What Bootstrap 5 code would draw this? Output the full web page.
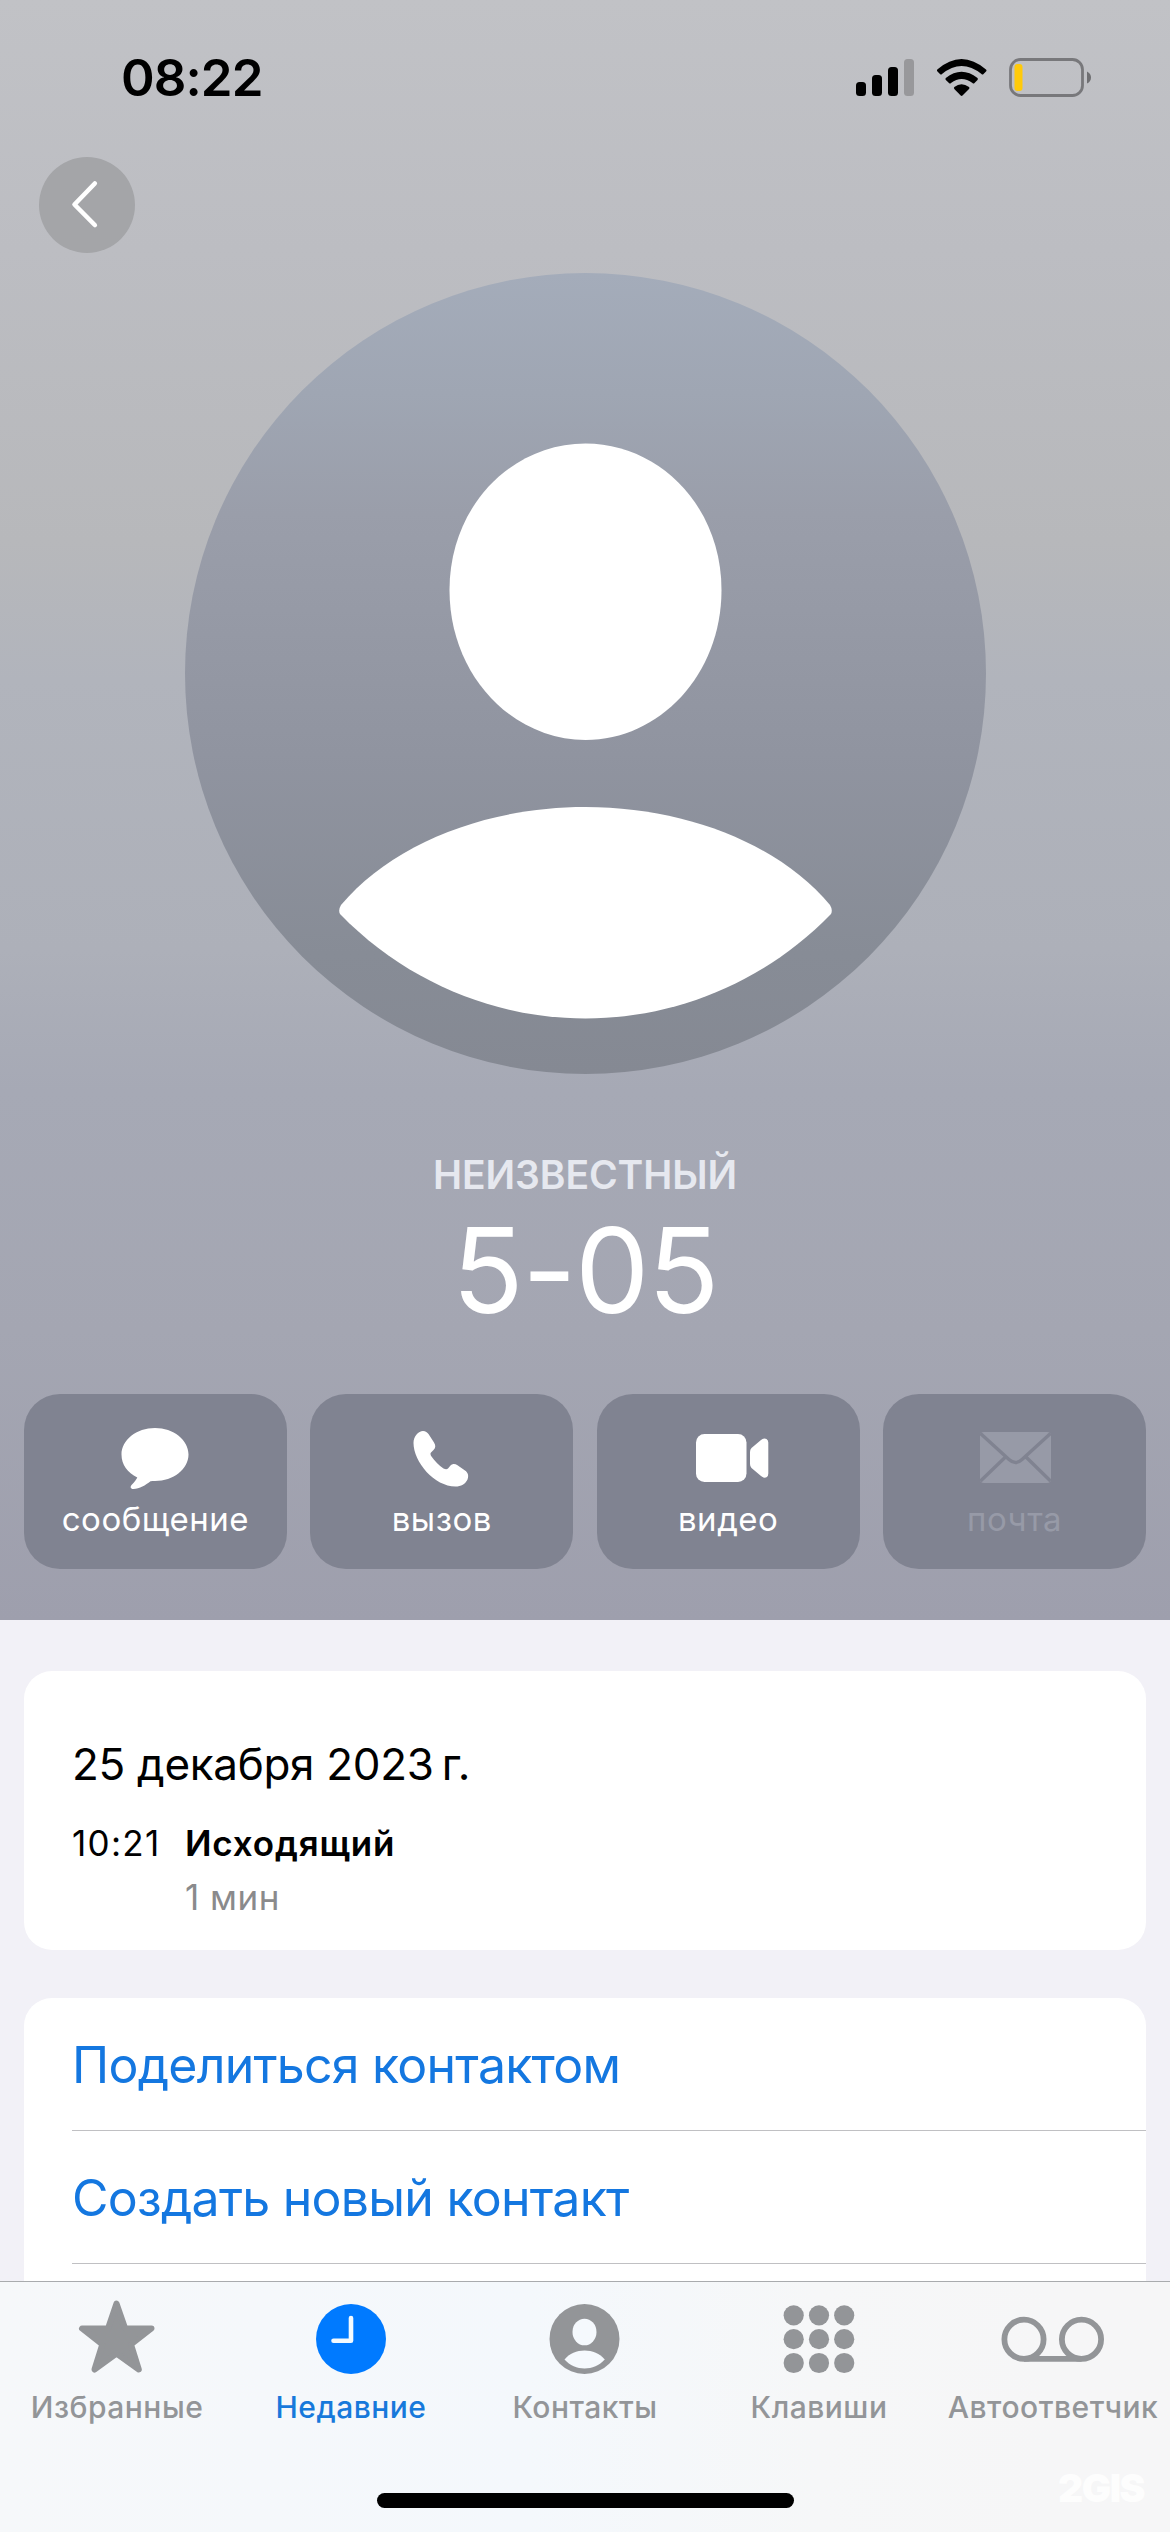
<!DOCTYPE html>
<html lang="ru">
<head>
<meta charset="utf-8">
<title>Недавние</title>
<meta name="viewport" content="width=device-width, initial-scale=1">
<link href="https://cdn.jsdelivr.net/npm/bootstrap@5.3.0/dist/css/bootstrap.min.css" rel="stylesheet">
<style>
  body { font-family: Inter, "Liberation Sans", sans-serif; background: #f2f1f7; color: #000; }
  .phone { width: 1170px; height: 2532px; }
  .hero { height: 1620px; background: linear-gradient(180deg, #c1c2c6 0, #bcbdc2 250px, #b7b8bb 540px, #b1b4bc 680px, #adb0b9 950px, #a6a9b5 1090px, #a4a6b2 1330px, #9e9fad 1620px); }
  .status { height: 156px; padding: 0 78px 0 121px; }
  .clock { font-size: 51px; line-height: 60px; font-weight: 600; letter-spacing: -.9px; }
  .back { width: 96px; height: 96px; margin: 1px 0 0 39px; background: #a4a5a8; }
  .avatar { margin-top: 20px; }
  .kind { margin-top: 71px; font-size: 39px; line-height: 60px; font-weight: 600; color: #e6e8ef; letter-spacing: -.1px; }
  .number { margin-top: 5px; font-size: 118px; line-height: 120px; font-weight: 400; letter-spacing: -1.6px; }
  .actions { margin-top: 64px; padding: 0 24px; gap: 23.6px; }
  .action { height: 175px; padding: 31px 0 0; border-radius: 36px; background: #808391; font-size: 33px; line-height: 40px; letter-spacing: .5px; }
  .action svg { height: 66px; width: 90px; margin-bottom: 8px; }
  .off { color: #979aa7; }
  .panel { margin: 0 24px; background: #fff; border-radius: 28px; }
  .log { margin-top: 51px; height: 279px; padding: 63px 48px 0; }
  .day { font-size: 44px; line-height: 60px; letter-spacing: -.3px; }
  .entry { font-size: 35px; line-height: 50px; letter-spacing: .5px; }
  .stamp { width: 113px; letter-spacing: 1.3px; }
  .kindline { letter-spacing: .8px; }
  .muted-line { color: #8a8a8c; }
  .links { margin-top: 48px; padding-left: 48px; height: 320px; }
  .linkrow { height: 133px; border-bottom: 1px solid #c0c0c3; font-size: 50px; color: #1477e0; padding-top: 3px; letter-spacing: -.75px; }
  .tabs { height: 251px; border-top: 1px solid #a9abae; background: linear-gradient(90deg, #f6f8fa, #f4f8fc 45%, #f6f7f8 70%, #f6f6f7 90%); padding-top: 17px; color: #939598; }
  .tab { width: 234px; font-size: 30px; line-height: 36px; font-weight: 500; letter-spacing: .5px; white-space: nowrap; }
  .tab svg { height: 80px; width: 110px; margin-bottom: 10px; }
  .active-tab { color: #1779db; }
  .home { width: 417px; height: 15px; margin-top: 68px; background: #000; }
  .wm { right: 26px; bottom: 24px; font-size: 39px; line-height: 40px; font-weight: 900; color: #fdfdfd; letter-spacing: -1.5px; }
</style>
</head>
<body>
<div class="phone d-flex flex-column position-relative overflow-hidden">
  <header class="hero flex-shrink-0 d-flex flex-column">
    <div class="status d-flex align-items-center justify-content-between">
      <div class="clock">08:22</div>
      <svg width="236" height="40" viewBox="856 58 236 40">
        <rect x="856" y="82" width="10" height="14" rx="3.5"/><rect x="872" y="75" width="10" height="21" rx="3.5"/><rect x="888" y="67" width="10" height="29" rx="3.5"/><rect x="904" y="59" width="10" height="37" rx="3.5" fill="#98989b"/>
        <path d="M937.300 69.500Q961.500 48.500 986 69.500Q987 70.500 986 71.500L983.500 74Q982.500 75 981.500 74Q961.500 58 942 74Q941 75 940 74L937.500 71.500Q936.500 70.500 937.300 69.500Z"/>
        <path d="M945.800 78Q961.500 65.500 977.500 78Q978.300 79 977.500 80L974.500 83Q973.500 84 972.500 83Q961.500 75 951 83Q950 84 949 83L945.800 80Q945 79 945.800 78Z"/>
        <path d="M954.300 87Q961.500 81.500 969 87Q970 88 969 89L962.500 95.500Q961.600 96.300 960.700 95.500L954.300 89Q953.500 88 954.300 87Z"/>
        <rect x="1010.500" y="59.500" width="72" height="36" rx="10" fill="none" stroke="#78787b" stroke-width="2.800"/>
        <rect x="1014.500" y="64" width="8" height="27" rx="3" fill="#ffca0a"/>
        <path d="M1087 71.500Q1091 73.500 1091 77.500T1087 83.500Z" fill="#6f6f72"/>
      </svg>
    </div>
    <button class="back btn p-0 border-0 rounded-circle d-flex" aria-label="Назад">
      <svg width="96" height="96" viewBox="0 0 96 96" fill="none" stroke="#fff" stroke-width="4.600" stroke-linecap="round" stroke-linejoin="round"><path d="M55.800 26.500L35.500 47.500L55.800 68"/></svg>
    </button>
    <svg class="avatar align-self-center" width="801" height="801" viewBox="184 273 801 801">
      <defs><linearGradient id="disc" x1="0" y1="0" x2="0" y2="1"><stop offset="0" stop-color="#a4acba"/><stop offset=".15" stop-color="#9fa6b3"/><stop offset=".3" stop-color="#9a9eaa"/><stop offset=".6" stop-color="#9094a0"/><stop offset=".85" stop-color="#878c96"/><stop offset="1" stop-color="#858993"/></linearGradient></defs>
      <circle cx="584.500" cy="673.500" r="400.500" fill="url(#disc)"/>
      <path fill="#fff" d="M584.500 443.500C658 443.500 720.500 506 720.500 590C720.500 675 658 740 584.500 740S448.500 675 448.500 590C448.500 506 511 443.500 584.500 443.500Z"/>
      <path fill="#fff" d="M340 905C392 843 486 807 584.500 807S777 843 829 905Q832 910 830 914C762 984 672 1018.500 584.500 1018.500S407 984 339 914Q337 910 340 905Z"/>
    </svg>
    <div class="kind text-center">НЕИЗВЕСТНЫЙ</div>
    <div class="number text-center text-white">5-05</div>
    <div class="actions d-flex">
      <button class="action btn border-0 text-white flex-fill w-100 d-flex flex-column align-items-center">
        <svg viewBox="110.500 1425 90 66" fill="currentColor"><path d="M155.500 1428C174 1428 189 1440 189 1454.500S174 1481 155.500 1481C154 1481 152.500 1481 151 1481.200C146 1485 140 1489 134 1489C130.500 1489 130.500 1486.500 132.500 1484.500C135 1482 136.500 1480 137.800 1477.500C128 1472.500 122 1465 122 1454.500C122 1440 137 1428 155.500 1428Z"/></svg>
        <span>сообщение</span>
      </button>
      <button class="action btn border-0 text-white flex-fill w-100 d-flex flex-column align-items-center">
        <svg viewBox="396.500 1425 90 66" fill="currentColor"><path d="M413 1443C413 1436 418 1431 422.500 1431C425 1431 427 1432.500 428 1434L433.500 1442.500C435.500 1445.500 435 1448 433 1450L430.500 1452.500C429.500 1453.500 430 1455 431 1456.500C434 1461 438.500 1465.500 443 1468.500C445 1469.500 446.500 1469.500 447.500 1468.500L450 1465.500C452 1463.500 454.500 1463.500 457 1465.300L464.500 1470.500C467.500 1472.500 468.500 1475.500 467 1479.500C465 1484 460.500 1486.500 455 1486.500C434 1486.500 413 1462 413 1443Z"/></svg>
        <span>вызов</span>
      </button>
      <button class="action btn border-0 text-white flex-fill w-100 d-flex flex-column align-items-center">
        <svg viewBox="683 1425 90 66" fill="currentColor"><rect x="696" y="1434" width="50.500" height="48" rx="8.500"/><path d="M750 1452Q750 1449.500 751.500 1448L761 1440Q764 1437.500 766.500 1439Q768.300 1440 768.300 1442.500V1473.500Q768.300 1476.500 766.500 1477.300Q764 1478.500 761 1476L751.500 1468Q750 1466.500 750 1464Z"/></svg>
        <span>видео</span>
      </button>
      <button class="action off btn border-0 flex-fill w-100 d-flex flex-column align-items-center">
        <svg viewBox="969 1425 90 66"><rect x="979" y="1432" width="71" height="51" rx="4" fill="currentColor"/><path d="M979.500 1433.500L1008 1459.500Q1014.500 1465.500 1021 1459.500L1049.500 1433.500M979.500 1481L1004 1457.500M1049.500 1481L1025.500 1457.500" fill="none" stroke="#808391" stroke-width="3.400"/></svg>
        <span>почта</span>
      </button>
    </div>
  </header>

  <main class="flex-grow-1 overflow-hidden">
    <section class="panel log">
      <div class="day">25 декабря 2023&#8239;г.</div>
      <div class="entry d-flex mt-4"><span class="stamp">10:21</span><span class="kindline fw-semibold">Исходящий</span></div>
      <div class="entry d-flex mt-1 muted-line"><span class="stamp"></span><span>1 мин</span></div>
    </section>
    <section class="panel links">
      <div class="linkrow d-flex align-items-center">Поделиться контактом</div>
      <div class="linkrow d-flex align-items-center">Создать новый контакт</div>
    </section>
  </main>

  <nav class="tabs flex-shrink-0 d-flex flex-column align-items-center">
    <div class="d-flex">
      <div class="tab d-flex flex-column align-items-center">
        <svg viewBox="61.500 2299 110 80" fill="currentColor" stroke="currentColor" stroke-width="6" stroke-linejoin="round"><path d="M116 2303.500L124.700 2328.500H151L130.500 2344.500L138.300 2369.500L116 2353.500L94 2369.500L101.800 2344.500L81.500 2328.500H107.500Z"/></svg>
        <span>Избранные</span>
      </div>
      <div class="tab active-tab d-flex flex-column align-items-center">
        <svg viewBox="296 2299 110 80"><circle cx="351" cy="2339" r="35" fill="#007aff"/><path d="M351 2318V2340.800H333.500" fill="none" stroke="#f3faff" stroke-width="4.600" stroke-linecap="round" stroke-linejoin="round"/></svg>
        <span>Недавние</span>
      </div>
      <div class="tab d-flex flex-column align-items-center">
        <svg viewBox="530 2299 110 80"><circle cx="584.500" cy="2339" r="35" fill="currentColor"/><ellipse cx="584.500" cy="2332" rx="12" ry="13.300" fill="#f5f9fd"/><path d="M564.500 2359.500C574 2347.500 595 2347.500 604.800 2359.500C594 2371.500 575 2371.500 564.500 2359.500Z" fill="#f5f9fd"/></svg>
        <span>Контакты</span>
      </div>
      <div class="tab d-flex flex-column align-items-center">
        <svg viewBox="763.500 2299 110 80" fill="currentColor"><circle cx="793.200" cy="2315.300" r="10.100"/><circle cx="818.500" cy="2315.300" r="10.100"/><circle cx="843.700" cy="2315.300" r="10.100"/><circle cx="793.200" cy="2339.200" r="10.100"/><circle cx="818.500" cy="2339.200" r="10.100"/><circle cx="843.700" cy="2339.200" r="10.100"/><circle cx="793.200" cy="2363" r="10.100"/><circle cx="818.500" cy="2363" r="10.100"/><circle cx="843.700" cy="2363" r="10.100"/></svg>
        <span>Клавиши</span>
      </div>
      <div class="tab d-flex flex-column align-items-center">
        <svg viewBox="997.500 2299 110 80" fill="none" stroke="currentColor" stroke-width="5.800"><circle cx="1023.500" cy="2339.300" r="19.600"/><circle cx="1081" cy="2339.300" r="19.600"/><path d="M1023.500 2358.900H1081"/></svg>
        <span>Автоответчик</span>
      </div>
    </div>
    <div class="home rounded-pill"></div>
  </nav>
  <div class="wm position-absolute">2GIS</div>
</div>
<script src="https://cdn.jsdelivr.net/npm/bootstrap@5.3.0/dist/js/bootstrap.bundle.min.js"></script>
</body>
</html>
